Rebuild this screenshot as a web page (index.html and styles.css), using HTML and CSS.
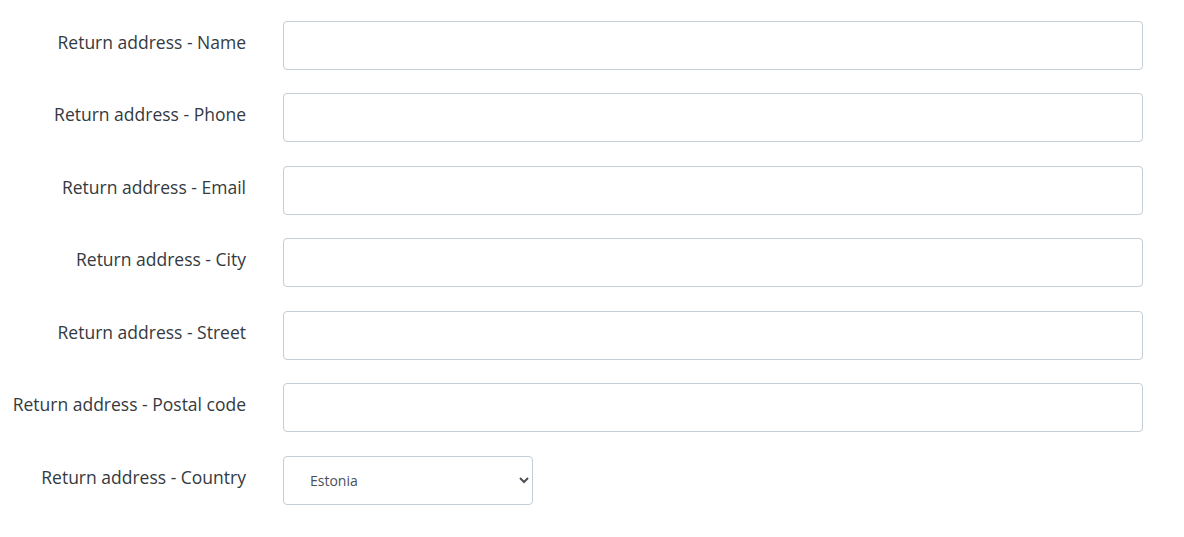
FILE: index.html
```html
<!DOCTYPE html>
<html lang="en">
<head>
<meta charset="utf-8">
<title>Return address</title>
<link rel="stylesheet" href="styles.css">
</head>
<body>
<form class="form">
  <div class="row"><label class="label" for="n">Return address - Name</label><input class="input" id="n" type="text"></div>
  <div class="row"><label class="label" for="p">Return address - Phone</label><input class="input" id="p" type="text"></div>
  <div class="row"><label class="label" for="e">Return address - Email</label><input class="input" id="e" type="text"></div>
  <div class="row"><label class="label" for="c">Return address - City</label><input class="input" id="c" type="text"></div>
  <div class="row"><label class="label" for="s">Return address - Street</label><input class="input" id="s" type="text"></div>
  <div class="row"><label class="label" for="z">Return address - Postal code</label><input class="input" id="z" type="text"></div>
  <div class="row"><label class="label" for="co">Return address - Country</label>
    <select class="select" id="co"><option>Estonia</option><option>Latvia</option><option>Lithuania</option></select>
  </div>
</form>
</body>
</html>
```
FILE: styles.css
```css
html, body {
  margin: 0;
  padding: 0;
  background: #ffffff;
}
body {
  font-family: "Open Sans", "Liberation Sans", sans-serif;
  color: #333a40;
}
.form {
  display: flex;
  flex-direction: column;
  gap: 23.5px;
  padding-top: 20.5px;
}
.row {
  display: grid;
  grid-template-columns: 246px 860px;
  column-gap: 37px;
  align-items: start;
}
.label {
  text-align: right;
  font-size: 17.5px;
  line-height: 24px;
  padding-top: 9px;
  color: #343a40;
}
.input, .select {
  box-sizing: border-box;
  height: 49px;
  border: 1px solid #c3ced6;
  border-radius: 4px;
  background: #fff;
  font-family: inherit;
  outline: none;
}
.input {
  width: 860px;
  padding: 0 12px;
  font-size: 15px;
}
.select {
  width: 250px;
  padding: 0 10px 0 22px;
  font-size: 14px;
  color: #495057;
}
```
